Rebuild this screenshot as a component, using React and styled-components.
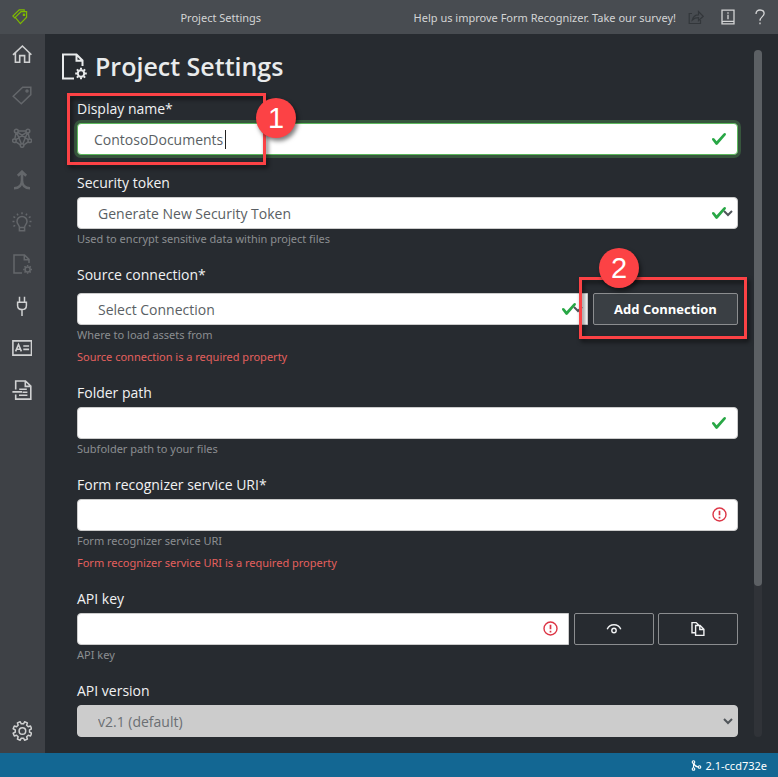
import React from "react";
import styled, { createGlobalStyle, css } from "styled-components";

const GlobalStyle = createGlobalStyle`
  *, *::before, *::after { box-sizing: border-box; }
  body {
    margin: 0;
    background: #272b30;
    color: #e9ecef;
    font-family: "Open Sans", "Noto Sans", sans-serif;
    font-size: 14px;
  }
`;

const smallText = css`
  font-family: "Noto Sans", "Open Sans", sans-serif;
  font-size: 11px;
`;

const Shell = styled.div`
  display: flex;
  flex-direction: column;
  min-height: 100vh;
`;

const TitleBar = styled.header`
  display: flex;
  align-items: center;
  justify-content: space-between;
  height: 34px;
  padding: 0 10px 0 12px;
  background: #484c51;
  color: #d3d4d5;
  ${smallText}
`;

const TitleLeft = styled.div`
  display: flex;
  align-items: center;
  flex: 1;
`;

const Brand = styled.span`
  display: flex;
  width: 16px;
  color: #7fba00;
`;

const WindowTitle = styled.span`
  flex: 1;
  text-align: center;
  white-space: nowrap;
`;

const TitleActions = styled.div`
  display: flex;
  align-items: center;
  gap: 12px;
`;

const SurveyLink = styled.a`
  color: inherit;
  text-decoration: none;
  white-space: nowrap;
`;

const IconButton = styled.button`
  display: flex;
  padding: 0;
  border: 0;
  background: none;
  color: ${(p) => (p.disabled ? "#33373b" : "#d3d4d5")};
`;

const IconPair = styled.div`
  display: flex;
  gap: 16px;
`;

const Body = styled.div`
  display: flex;
  flex: 1;
`;

const Sidebar = styled.nav`
  display: flex;
  flex-direction: column;
  width: 45px;
  background: #3e4146;
`;

const NavLink = styled.a`
  display: flex;
  padding: 10px 12px 12px;
  color: ${(p) => (p.$dim ? "#64676b" : "#d0d1d2")};
`;

const Spacer = styled.div`
  flex: 1;
`;

const Main = styled.main`
  display: flex;
  flex: 1;
  min-width: 0;
  padding: 16px;
`;

const Content = styled.div`
  flex: 1;
  min-width: 0;
`;

const ScrollTrack = styled.div`
  width: 8px;
  border-radius: 4px;
  background: #303338;
`;

const ScrollThumb = styled.div`
  height: 78%;
  border-radius: 4px;
  background: #5c6064;
`;

const Heading = styled.h1`
  display: flex;
  align-items: center;
  gap: 8px;
  height: 32px;
  margin: 0;
  font-size: 25px;
  font-weight: 600;
  line-height: 32px;
  color: #e9ebec;
`;

const Form = styled.form`
  display: flex;
  flex-direction: column;
  gap: 16px;
  padding: 15px 16px 0;
`;

const Group = styled.div`
  position: relative;
`;

const Label = styled.label`
  display: block;
  margin-bottom: ${(p) => (p.$roomy ? "6px" : "2px")};
  line-height: 24px;
  color: #f1f2f3;
`;

const ControlRow = styled.div`
  display: flex;
  gap: 5px;
`;

const ControlBox = styled.div`
  position: relative;
  flex: 1;
  min-width: 0;
`;

const controlStyle = css`
  display: block;
  width: 100%;
  height: 32px;
  margin: 0;
  border: 1px solid #ccc;
  border-radius: ${(p) => (p.$joined ? "4px 0 0 4px" : "4px")};
  background: #fff;
  color: #5a5f64;
  font-family: inherit;
  font-size: 14px;
  outline: none;
`;

const TextInput = styled.input`
  ${controlStyle}
  padding: 0 40px 0 16px;
  ${(p) =>
    p.$active &&
    css`
      border-color: #5cb85c;
      box-shadow: 0 0 0 3px rgba(92, 184, 92, 0.3);
    `}
`;

const Select = styled.select`
  ${controlStyle}
  appearance: none;
  padding: 0 40px 0 20px;
  &:disabled {
    border-color: #ccc;
    background: #ccc;
    color: #6b6f73;
    opacity: 1;
  }
`;

const Caret = styled.span`
  position: absolute;
  top: 7px;
  left: 148px;
  width: 1px;
  height: 19px;
  background: #222;
`;

const StatusMark = styled.span`
  position: absolute;
  top: 8px;
  right: 11px;
  display: flex;
  pointer-events: none;
`;

const ChevronMark = styled.span`
  position: absolute;
  top: 11px;
  right: 5px;
  display: flex;
  pointer-events: none;
`;

const HelpText = styled.div`
  margin-top: 2px;
  ${smallText}
  line-height: 16px;
  color: #8b8e91;
`;

const ErrorText = styled.div`
  margin-top: 6px;
  ${smallText}
  line-height: 16px;
  color: #e4605e;
`;

const AddSlot = styled.div`
  position: relative;
  width: 145px;
`;

const AddButton = styled.button`
  width: 100%;
  height: 32px;
  padding: 0;
  border: 1px solid #8b8d8f;
  border-radius: 2px;
  background: #3a3f44;
  color: #fff;
  font-family: inherit;
  font-size: 13px;
  font-weight: 700;
`;

const ButtonPair = styled.div`
  display: flex;
  gap: 4px;
`;

const ToolButton = styled.button`
  display: flex;
  align-items: center;
  justify-content: center;
  width: 80px;
  height: 32px;
  padding: 0;
  border: 1px solid #8b8d8f;
  border-radius: 2px;
  background: #272b30;
  color: #f1f2f3;
`;

const calloutFrame = css`
  position: absolute;
  z-index: 1;
  border: 3px solid #fc4245;
  filter: drop-shadow(2px 3px 2px rgba(0, 0, 0, 0.6));
  pointer-events: none;
`;

const NameCallout = styled.div`
  ${calloutFrame}
  top: -4px;
  left: -10px;
  width: 199px;
  height: 72px;
`;

const ButtonCallout = styled.div`
  ${calloutFrame}
  inset: -16px -9px -14px -14px;
`;

const Badge = styled.span`
  position: absolute;
  z-index: 2;
  top: ${(p) => p.$top}px;
  left: ${(p) => p.$left}px;
  width: 40px;
  height: 40px;
  border-radius: 50%;
  background: #fc4245;
  box-shadow: 2px 3px 4px rgba(0, 0, 0, 0.5);
  color: #fff;
  font-family: "Liberation Sans", Arial, sans-serif;
  font-size: 29px;
  line-height: 40px;
  text-align: center;
`;

const StatusBar = styled.footer`
  display: flex;
  align-items: center;
  justify-content: flex-end;
  gap: 4px;
  height: 24px;
  padding: 0 11px;
  background: #136793;
  color: #fff;
  ${smallText}
`;

function Svg({ size = 20, width, height, weight = 1.4, children }) {
  const w = width || size;
  const h = height || size;
  return (
    <svg
      width={w}
      height={h}
      viewBox={`0 0 ${w} ${h}`}
      fill="none"
      stroke="currentColor"
      strokeWidth={weight}
      aria-hidden="true"
    >
      {children}
    </svg>
  );
}

const cog = (cx, cy, r, teeth, root = 0.76) =>
  Array.from({ length: teeth }, (_, i) => {
    const step = (Math.PI * 2) / teeth;
    const at = (a, d) => `${(cx + Math.cos(a) * d).toFixed(2)} ${(cy + Math.sin(a) * d).toFixed(2)}`;
    const a = i * step + Math.PI / teeth;
    return `${i ? "L" : "M"}${at(a - step * 0.3, r * root)}L${at(a - step * 0.2, r)}L${at(a + step * 0.2, r)}L${at(a + step * 0.3, r * root)}`;
  }).join("") + "Z";

const spokes = (cx, cy, from, to, count) =>
  Array.from({ length: count }, (_, i) => {
    const a = (i * Math.PI * 2) / count;
    const at = (d) => `${(cx + Math.cos(a) * d).toFixed(2)} ${(cy + Math.sin(a) * d).toFixed(2)}`;
    return `M${at(from)}L${at(to)}`;
  }).join("");

const TagsIcon = () => (
  <Svg size={16} weight={1.2}>
    <path d="M3.2 9.3.9 7 7.2.9h5v1.8" />
    <path d="M3.2 8.4 9 2.7h5.6v5.5l-6.2 6.5-5.2-6.3Z" />
    <path d="M11.4 5.2h1.2v1.2h-1.2z" />
  </Svg>
);

const HomeIcon = () => (
  <Svg weight={1.6}>
    <path d="M1 10.8 10.4 2l9 8.8M3.4 9v9.2h4.3v-6.6h4.9v6.6h4.8V9" />
  </Svg>
);

const TagIcon = () => (
  <Svg weight={1.5}>
    <path d="M1.2 10.3 10.7 1.2h8.1v7.4l-9.5 9.2Z" />
    <circle cx="15" cy="5" r="1" />
  </Svg>
);

const ModelIcon = () => (
  <Svg weight={1.5}>
    <path d="M6.2 3.1h7.8M4 5 2.8 10.9M16.1 5l1.4 5.9M4 13.8l4.3 3.1M16.2 13.8l-4.3 3.1M5.8 4.4 16.2 11.6M14.4 4.4 4 11.6M4.9 5l4.4 10.8M15.3 5l-4.4 10.8" />
    <circle cx="4.3" cy="3.1" r="1.9" />
    <circle cx="15.9" cy="3.1" r="1.9" />
    <circle cx="2.4" cy="12.7" r="1.8" />
    <circle cx="17.8" cy="12.7" r="1.8" />
    <circle cx="10.1" cy="17.5" r="1.8" />
  </Svg>
);

const MergeIcon = () => (
  <Svg weight={2.6}>
    <path d="M10 2v8.5c0 4.5-3 7.8-8 7.800M10 10.5c0 4.5 3 7.8 8 7.8M5.800 5.7 10 1.7l4.2 4" />
  </Svg>
);

const BulbIcon = () => (
  <Svg weight={1.5}>
    <path d="M7.4 15.4c0-2.6-2.4-3.1-2.4-6a5 5 0 0 1 10 0c0 2.9-2.4 3.4-2.4 6ZM7.4 15.4v3.4h5.2v-3.4M10 .3v2M.5 9.6h2M17.5 9.6h2M5.1 1.6l.9 1.7M14.9 1.6 14 3.3M1.4 4.6l1.8 1M18.6 4.6l-1.8 1M1.4 14.3l1.8-1M18.6 14.3l-1.8-1" />
  </Svg>
);

const PageGearIcon = () => (
  <Svg weight={1.5}>
    <path d="M10 19H2V1h10.5l4.5 4.4V9M12.3 1.4v4.4h4.5" />
    <circle cx="15.6" cy="15.4" r="2.5" />
    <path d={spokes(15.6, 15.4, 2.9, 4.4, 8)} />
  </Svg>
);

const TitlePageGearIcon = () => (
  <Svg width={26} height={28} weight={2}>
    <path d="M13 26.5H2v-24h13.500l6 6V14M15.5 2.800v6h6" />
    <circle cx="20" cy="21.5" r="3.2" />
    <path d={spokes(20, 21.5, 3.8, 5.8, 8)} />
  </Svg>
);

const PlugIcon = () => (
  <Svg weight={1.5}>
    <path d="M7.5 6V.8M12.5 6V.8M5.6 6.3h8.8v3.2c0 2.8-1.7 4.1-4.4 4.1s-4.4-1.3-4.4-4.1ZM10 13.6V20" />
  </Svg>
);

const CardIcon = () => (
  <Svg weight={1.6}>
    <path d="M.9 2.9h18.600v14.200H.9ZM3.6 13.4 6.5 6.5l2.9 6.9M4.6 11.3h3.800M11.3 8h5.8M11.3 11.4h5.8" />
  </Svg>
);

const ScriptIcon = () => (
  <Svg weight={1.6}>
    <path d="M3.7 9.500V1h9.8l5.3 5.2v12.9H3.7v-4.600M13.3 1.300v5.1h5.2M.4 11.9h9.600M7.2 9.200h7.600M10.5 12.2h4.9M7 15.2h8.400" />
  </Svg>
);

const GearIcon = () => (
  <Svg weight={1.5}>
    <path d={cog(10.4, 10, 9.5, 8)} strokeLinejoin="round" />
    <circle cx="10.4" cy="10" r="3.3" />
  </Svg>
);

const ShareIcon = () => (
  <Svg size={16} weight={1.2}>
    <path d="M4 4.5H1.2v10h11.3V11M4.3 11c.8-3.7 3-5.2 6.2-5.2V2.5l4.7 4.8-4.7 4.3V8.7c-2.6 0-4.4.5-6.2 2.3Z" />
  </Svg>
);

const BookIcon = () => (
  <Svg size={16} weight={1.3}>
    <path d="M14 12.3V1.2H2v13.6h12v-2.5H3.5c-1 0-1.5.6-1.5 1.3M8 3.3v1.4M8 5.8v4.5" />
  </Svg>
);

const HelpIcon = () => (
  <Svg size={16} weight={1.3}>
    <path d="M4 5c0-2.5 1.6-4 4-4s4.1 1.5 4.1 3.6C12.1 7.6 8 7.8 8 11.8M8 13.5v1.8" />
  </Svg>
);

const CheckIcon = () => (
  <svg width="16" height="16" viewBox="0 0 8 8" aria-hidden="true">
    <path
      fill="#28a745"
      d="M2.3 6.73L.6 4.53c-.4-1.04.46-1.4 1.1-.8l1.1 1.4 3.4-3.8c.6-.63 1.6-.27 1.2.7l-4 4.6c-.43.5-.8.4-1.1.1z"
    />
  </svg>
);

const AlertIcon = () => (
  <svg width="16" height="16" viewBox="0 0 16 16" fill="none" stroke="#dc3545" aria-hidden="true">
    <circle cx="8.5" cy="7.5" r="6.5" strokeWidth="1.4" />
    <path d="M8.5 3.8v4.5M8.5 9.8v1.6" strokeWidth="1.7" />
  </svg>
);

const ChevronIcon = () => (
  <svg width="10" height="10" viewBox="0 0 10 10" fill="none" stroke="#50555a" strokeWidth="2" aria-hidden="true">
    <path d="M1 3l4 4 4-4" />
  </svg>
);

const EyeIcon = () => (
  <Svg size={16} weight={1.4}>
    <path d="M1.2 8.2C2.6 5 5 3.8 8 3.8s5.4 1.2 6.8 4.4" />
    <circle cx="8" cy="9.5" r="2.2" />
  </Svg>
);

const CopyIcon = () => (
  <Svg size={16} weight={1.4}>
    <path d="M5 11.8H2V1.6h4.2l2.6 2.6M5.6 4.5h4.5l3.8 3.7v6.2H5.6ZM9.8 4.7v3.8h3.9" />
  </Svg>
);

const BranchIcon = () => (
  <Svg size={11} weight={1.1}>
    <circle cx="2.5" cy="2" r="1.3" />
    <circle cx="2.5" cy="9" r="1.3" />
    <circle cx="8.5" cy="7" r="1.3" />
    <path d="M2.5 3.3v4.4M2.7 3.3C3.5 5.5 5 6.8 7.2 7" />
  </Svg>
);

const navItems = [
  { name: "Home", Icon: HomeIcon },
  { name: "Tags", Icon: TagIcon, dim: true },
  { name: "Train", Icon: ModelIcon, dim: true },
  { name: "Compose", Icon: MergeIcon, dim: true },
  { name: "Analyze", Icon: BulbIcon, dim: true },
  { name: "Project settings", Icon: PageGearIcon, dim: true },
  { name: "Connections", Icon: PlugIcon },
  { name: "Prebuilt analyze", Icon: CardIcon },
  { name: "Layout analyze", Icon: ScriptIcon },
];

function Mark({ kind }) {
  return <StatusMark>{kind === "ok" ? <CheckIcon /> : <AlertIcon />}</StatusMark>;
}

export default function App() {
  return (
    <Shell>
      <GlobalStyle />
      <TitleBar>
        <TitleLeft>
          <Brand><TagsIcon /></Brand>
          <WindowTitle>Project Settings</WindowTitle>
        </TitleLeft>
        <TitleActions>
          <SurveyLink href="#survey">Help us improve Form Recognizer. Take our survey!</SurveyLink>
          <IconPair>
            <IconButton type="button" aria-label="Share" disabled><ShareIcon /></IconButton>
            <IconButton type="button" aria-label="Documentation"><BookIcon /></IconButton>
            <IconButton type="button" aria-label="Help"><HelpIcon /></IconButton>
          </IconPair>
        </TitleActions>
      </TitleBar>
      <Body>
        <Sidebar>
          {navItems.map(({ name, Icon, dim }) => (
            <NavLink key={name} href="#" aria-label={name} $dim={dim}><Icon /></NavLink>
          ))}
          <Spacer />
          <NavLink href="#" aria-label="Settings"><GearIcon /></NavLink>
        </Sidebar>
        <Main>
          <Content>
            <Heading><TitlePageGearIcon />Project Settings</Heading>
            <Form>
              <Group>
                <Label htmlFor="name">Display name*</Label>
                <ControlBox>
                  <TextInput id="name" defaultValue="ContosoDocuments" $active />
                  <Caret />
                  <Mark kind="ok" />
                </ControlBox>
                <NameCallout />
                <Badge $top={1} $left={179}>1</Badge>
              </Group>
              <Group>
                <Label htmlFor="token">Security token</Label>
                <ControlBox>
                  <Select id="token"><option>Generate New Security Token</option></Select>
                  <Mark kind="ok" />
                  <ChevronMark><ChevronIcon /></ChevronMark>
                </ControlBox>
                <HelpText>Used to encrypt sensitive data within project files</HelpText>
              </Group>
              <Group>
                <Label htmlFor="source" $roomy>Source connection*</Label>
                <ControlRow>
                  <ControlBox>
                    <Select id="source" $joined><option>Select Connection</option></Select>
                    <Mark kind="ok" />
                    <ChevronMark><ChevronIcon /></ChevronMark>
                  </ControlBox>
                  <AddSlot>
                    <AddButton type="button">Add Connection</AddButton>
                    <ButtonCallout />
                    <Badge $top={-45} $left={6}>2</Badge>
                  </AddSlot>
                </ControlRow>
                <HelpText>Where to load assets from</HelpText>
                <ErrorText>Source connection is a required property</ErrorText>
              </Group>
              <Group>
                <Label htmlFor="folder">Folder path</Label>
                <ControlBox>
                  <TextInput id="folder" />
                  <Mark kind="ok" />
                </ControlBox>
                <HelpText>Subfolder path to your files</HelpText>
              </Group>
              <Group>
                <Label htmlFor="uri">Form recognizer service URI*</Label>
                <ControlBox>
                  <TextInput id="uri" />
                  <Mark kind="error" />
                </ControlBox>
                <HelpText>Form recognizer service URI</HelpText>
                <ErrorText>Form recognizer service URI is a required property</ErrorText>
              </Group>
              <Group>
                <Label htmlFor="key">API key</Label>
                <ControlRow>
                  <ControlBox>
                    <TextInput id="key" type="password" $joined />
                    <Mark kind="error" />
                  </ControlBox>
                  <ButtonPair>
                    <ToolButton type="button" aria-label="Show key"><EyeIcon /></ToolButton>
                    <ToolButton type="button" aria-label="Copy key"><CopyIcon /></ToolButton>
                  </ButtonPair>
                </ControlRow>
                <HelpText>API key</HelpText>
              </Group>
              <Group>
                <Label htmlFor="version">API version</Label>
                <ControlBox>
                  <Select id="version" disabled><option>v2.1 (default)</option></Select>
                  <ChevronMark><ChevronIcon /></ChevronMark>
                </ControlBox>
              </Group>
            </Form>
          </Content>
          <ScrollTrack><ScrollThumb /></ScrollTrack>
        </Main>
      </Body>
      <StatusBar><BranchIcon />2.1-ccd732e</StatusBar>
    </Shell>
  );
}
